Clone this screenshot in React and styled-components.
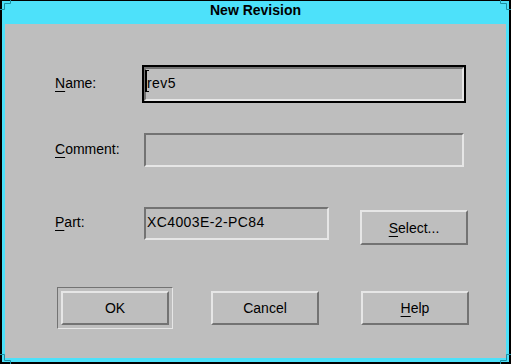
import React from 'react';
import styled, { createGlobalStyle } from 'styled-components';

const GlobalStyle = createGlobalStyle`
  html, body {
    margin: 0;
    padding: 0;
  }
  body {
    font-family: "Liberation Sans", Arial, Helvetica, sans-serif;
    color: #000;
  }
`;

const Frame = styled.div`
  position: relative;
  box-sizing: border-box;
  width: 511px;
  height: 364px;
  display: flex;
  flex-direction: column;
  padding: 0 3px 4px 3px;
  background: #4de1fa;
  border: 2px solid #000;
  border-top-width: 1px;
`;

const CornerMark = styled.svg`
  position: absolute;
  width: 11px;
  height: 10px;
  ${p => (p.$bottom ? 'bottom: -2px;' : 'top: -1px;')}
  ${p => (p.$right ? 'right: -2px;' : 'left: -2px;')}
  transform: scale(${p => (p.$right ? -1 : 1)}, ${p => (p.$bottom ? -1 : 1)});
`;

const TitleBar = styled.div`
  height: 23px;
  line-height: 19px;
  text-align: center;
  font-size: 14px;
  font-weight: bold;
`;

const Content = styled.div`
  flex: 1;
  display: flex;
  flex-direction: column;
  padding-top: 43px;
  background: #bebebe;
`;

const Row = styled.div`
  display: grid;
  grid-template-columns: 89px auto auto;
  justify-content: start;
  align-items: start;
  padding-left: 50px;
  margin-top: ${p => p.$gap || 0}px;
`;

const Label = styled.div`
  height: ${p => p.$h || 34}px;
  display: flex;
  align-items: center;
  padding-bottom: 3px;
  box-sizing: border-box;
  font-size: 14px;
`;

const Mnemonic = styled.span`
  text-decoration: underline;
  text-underline-offset: 3px;
`;

const Field = styled.div`
  position: relative;
  box-sizing: border-box;
  width: ${p => p.$w}px;
  height: ${p => p.$h || 34}px;
  display: flex;
  align-items: center;
  padding: 0 0 3px 1px;
  border: 2px solid;
  border-color: #737373 #e6e6e6 #e6e6e6 #737373;
  outline: ${p => (p.$focused ? '2px solid #000' : 'none')};
  font-size: 14px;
  letter-spacing: 0.4px;
  white-space: pre;
`;

const Caret = styled.span`
  position: absolute;
  left: -1px;
  top: 1px;
  box-sizing: border-box;
  width: 4px;
  height: 22px;
  border: 2px solid #000;
  border-right: none;
  border-top-width: 1px;
  border-bottom-width: 1px;
`;

const Button = styled.button`
  box-sizing: border-box;
  width: 108px;
  height: ${p => p.$h || 34}px;
  margin: ${p => p.$m || '0'};
  padding: 0;
  border: 2px solid;
  border-color: #e6e6e6 #737373 #737373 #e6e6e6;
  background: #bebebe;
  font-family: inherit;
  font-size: 14px;
  color: #000;
`;

const ButtonRow = styled.div`
  display: grid;
  grid-template-columns: repeat(3, 150px);
  justify-items: center;
  align-items: center;
  padding-left: 35px;
  margin-top: 42px;
`;

const DefaultRing = styled.div`
  display: flex;
  padding: 3px;
  border: 1px solid;
  border-color: #737373 #e6e6e6 #e6e6e6 #737373;
`;

const Corner = props => (
  <CornerMark viewBox="0 0 11 10" {...props}>
    <path d="M10.5 0 V3.5 H4.5 V9.5 H0" fill="none" stroke="#1d8fa2" strokeWidth="1" />
  </CornerMark>
);

export default function App() {
  return (
    <>
      <GlobalStyle />
      <Frame>
        <Corner />
        <Corner $right />
        <Corner $bottom />
        <Corner $right $bottom />
        <TitleBar>New Revision</TitleBar>
        <Content>
          <Row>
            <Label>
              <span><Mnemonic>N</Mnemonic>ame:</span>
            </Label>
            <Field $w={320} $focused>
              <Caret />
              rev5
            </Field>
          </Row>
          <Row $gap={32}>
            <Label>
              <span><Mnemonic>C</Mnemonic>omment:</span>
            </Label>
            <Field $w={320} />
          </Row>
          <Row $gap={40}>
            <Label $h={33}>
              <span><Mnemonic>P</Mnemonic>art:</span>
            </Label>
            <Field $w={185} $h={33}>XC4003E-2-PC84</Field>
            <Button $h={35} $m="3px 0 0 31px">
              <Mnemonic>S</Mnemonic>elect...
            </Button>
          </Row>
          <ButtonRow>
            <DefaultRing>
              <Button>OK</Button>
            </DefaultRing>
            <Button>Cancel</Button>
            <Button>
              <Mnemonic>H</Mnemonic>elp
            </Button>
          </ButtonRow>
        </Content>
      </Frame>
    </>
  );
}
